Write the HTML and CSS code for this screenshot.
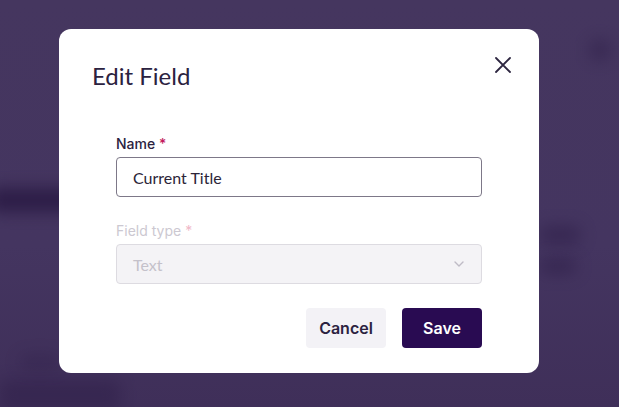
FILE: index.html
```html
<!DOCTYPE html>
<html lang="en">
<head>
<meta charset="utf-8">
<title>Edit Field</title>
<link rel="stylesheet" href="styles.css">
</head>
<body>
<div class="backdrop" aria-hidden="true">
  <div class="blob b1"></div>
  <div class="blob b2"></div>
  <div class="blob b3"></div>
  <div class="blob b4"></div>
  <div class="blob b5"></div>
  <div class="blob b6"></div>
</div>
<div class="overlay">
  <div class="modal" role="dialog" aria-labelledby="dlg-title">
    <div class="modal-header">
      <h2 class="modal-title" id="dlg-title">Edit Field</h2>
      <button class="close-btn" aria-label="Close">
        <svg width="18" height="18" viewBox="0 0 18 18"><path d="M2 2 L16 16 M16 2 L2 16" stroke="#2d2640" stroke-width="1.8" stroke-linecap="round" fill="none"/></svg>
      </button>
    </div>
    <div class="modal-body">
      <div class="field">
        <label class="label">Name <span class="req">*</span></label>
        <div class="input">Current Title</div>
      </div>
      <div class="field disabled">
        <label class="label">Field type <span class="req">*</span></label>
        <div class="input select">
          <span>Text</span>
          <svg width="10" height="6" viewBox="0 0 10 6"><path d="M1 1 L5 5 L9 1" stroke="#bfbbc6" stroke-width="1.4" fill="none" stroke-linecap="round" stroke-linejoin="round"/></svg>
        </div>
      </div>
      <div class="actions">
        <button class="btn btn-cancel">Cancel</button>
        <button class="btn btn-save">Save</button>
      </div>
    </div>
  </div>
</div>
</body>
</html>
```
FILE: styles.css
```css
* { box-sizing: border-box; }
html, body {
  margin: 0;
  width: 619px;
  height: 407px;
  overflow: hidden;
}
body {
  background: #443560;
  font-family: "Lato", "Inter", sans-serif;
  position: relative;
}
.backdrop {
  position: absolute;
  inset: 0;
  overflow: hidden;
  background: linear-gradient(180deg, #45365f 0%, #443560 60%, #3f2f59 100%);
}
.blob {
  position: absolute;
  background: #2a1a44;
  filter: blur(8px);
  border-radius: 6px;
}
.b1 { left: -10px; top: 188px; width: 90px; height: 24px; opacity: 0.9; }
.b2 { left: 540px; top: 226px; width: 40px; height: 18px; opacity: 0.5; }
.b3 { left: 540px; top: 258px; width: 36px; height: 16px; opacity: 0.5; }
.b4 { left: 0; top: 380px; width: 120px; height: 30px; opacity: 0.4; }
.b5 { left: 590px; top: 40px; width: 20px; height: 20px; opacity: 0.45; }
.b6 { left: 20px; top: 355px; width: 40px; height: 14px; opacity: 0.35; }

.overlay {
  position: relative;
  padding: 29px 0 0 59px;
}
.modal {
  width: 480px;
  height: 344px;
  background: #ffffff;
  border-radius: 12px;
  padding: 26px 27px 0 33px;
}
.modal-header {
  display: flex;
  justify-content: space-between;
  align-items: flex-start;
}
.modal-title {
  margin: 6px 0 0;
  font-size: 24px;
  line-height: 30px;
  font-weight: 400;
  color: #2b2240;
}
.close-btn {
  border: 0;
  background: none;
  padding: 0;
  width: 18px;
  height: 18px;
  display: flex;
  margin-top: 1px;
}
.modal-body {
  padding: 43px 30px 0 24px;
}
.field {
  display: flex;
  flex-direction: column;
  gap: 3px;
  margin-bottom: 24px;
}
.label {
  font-family: "Inter", "Lato", sans-serif;
  font-size: 14px;
  line-height: 20px;
  font-weight: 500;
  color: #2b2240;
}
.req { color: #c2185b; }
.input {
  height: 40px;
  border: 1px solid #7d7888;
  border-radius: 4px;
  padding: 0 16px;
  display: flex;
  align-items: center;
  font-size: 16px;
  color: #2b2438;
}
.disabled .label { color: #ccc8d1; font-weight: 400; }
.disabled .req { color: #f0b8c8; }
.select {
  background: #f4f3f6;
  border-color: #dddbe1;
  color: #c4c1ca;
  justify-content: space-between;
  padding-right: 17px;
}
.actions {
  display: flex;
  justify-content: flex-end;
  gap: 16px;
}
.btn {
  width: 80px;
  height: 40px;
  border: 0;
  border-radius: 4px;
  font-family: "Inter", "Lato", sans-serif;
  font-size: 16px;
  font-weight: 600;
}
.btn-cancel { background: #f3f2f6; color: #2b2240; }
.btn-save { background: #290b52; color: #ffffff; }
```
